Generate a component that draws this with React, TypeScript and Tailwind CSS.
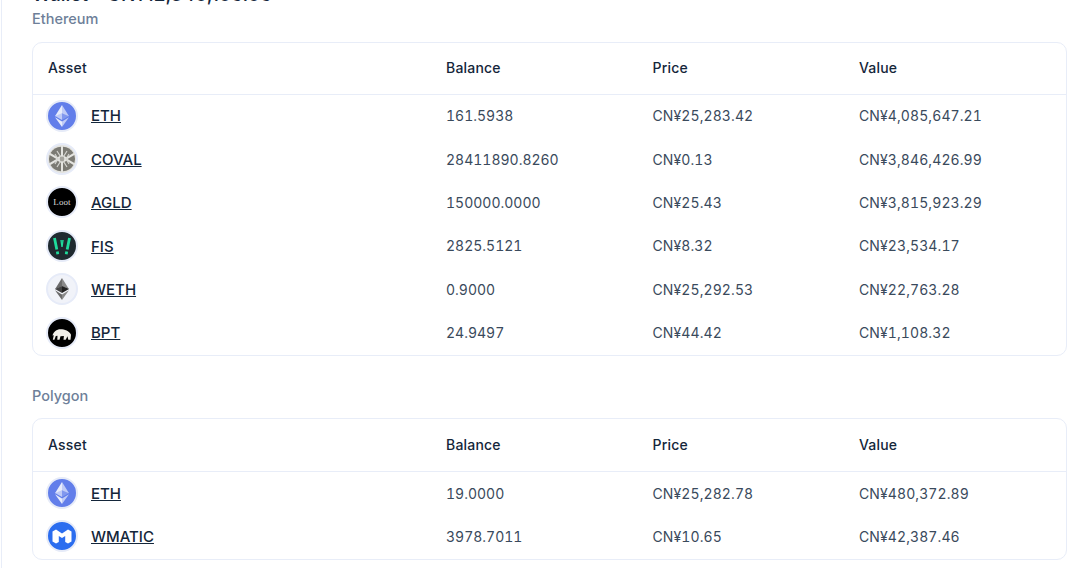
const font = { fontFamily: "Inter, sans-serif" };

type Row = { icon: string; name: string; balance: string; price: string; value: string };

const ethereum: Row[] = [
  { icon: "eth", name: "ETH", balance: "161.5938", price: "CN¥25,283.42", value: "CN¥4,085,647.21" },
  { icon: "coval", name: "COVAL", balance: "28411890.8260", price: "CN¥0.13", value: "CN¥3,846,426.99" },
  { icon: "agld", name: "AGLD", balance: "150000.0000", price: "CN¥25.43", value: "CN¥3,815,923.29" },
  { icon: "fis", name: "FIS", balance: "2825.5121", price: "CN¥8.32", value: "CN¥23,534.17" },
  { icon: "weth", name: "WETH", balance: "0.9000", price: "CN¥25,292.53", value: "CN¥22,763.28" },
  { icon: "bpt", name: "BPT", balance: "24.9497", price: "CN¥44.42", value: "CN¥1,108.32" },
];

const polygon: Row[] = [
  { icon: "eth", name: "ETH", balance: "19.0000", price: "CN¥25,282.78", value: "CN¥480,372.89" },
  { icon: "wmatic", name: "WMATIC", balance: "3978.7011", price: "CN¥10.65", value: "CN¥42,387.46" },
];

const TokenIcon = ({ icon }: { icon: string }) => {
  if (icon === "eth" || icon === "weth") {
    const dark = icon === "weth";
    return (
      <svg viewBox="0 0 32 32" className="w-[32px] h-[32px] shrink-0">
        <circle cx="16" cy="16" r="15" fill={dark ? "#f1f3f9" : "#627eea"} stroke="#e6ebf8" strokeWidth="2" />
        <path d="M16 5v8.2l7 3.1z" fill={dark ? "#8a8a8a" : "#fff"} fillOpacity={dark ? 1 : 0.6} />
        <path d="M16 5l-7 11.3 7-3.1z" fill={dark ? "#6b6b6b" : "#fff"} fillOpacity={dark ? 1 : 0.85} />
        <path d="M16 21.4v5.600l7-9.700z" fill={dark ? "#8a8a8a" : "#fff"} fillOpacity={dark ? 1 : 0.6} />
        <path d="M16 27v-5.600l-7-4.100z" fill={dark ? "#6b6b6b" : "#fff"} fillOpacity={dark ? 1 : 0.85} />
        <path d="M16 20.100l7-4.100-7-3.100z" fill={dark ? "#222" : "#fff"} fillOpacity={dark ? 1 : 0.2} />
        <path d="M9 16l7 4.100v-7.200z" fill={dark ? "#444" : "#fff"} fillOpacity={dark ? 1 : 0.6} />
      </svg>
    );
  }
  if (icon === "coval") {
    return (
      <svg viewBox="0 0 32 32" className="w-[32px] h-[32px] shrink-0">
        <circle cx="16" cy="16" r="15" fill="#e4e4e0" stroke="#e6ebf8" strokeWidth="2" />
        <g fill="#7b7a73">
          <path d="M15 3.800v8.400l-3.500 2-7-4.100A13 13 0 0 1 15 3.800z" />
          <path d="M17 3.800v8.400l3.500 2 7-4.100A13 13 0 0 0 17 3.800z" />
          <path d="M15 28.200v-8.400l-3.500-2-7 4.100A13 13 0 0 0 15 28.200z" />
          <path d="M17 28.200v-8.400l3.500-2 7 4.100A13 13 0 0 1 17 28.200z" />
          <path d="M3.600 12l6.900 4-6.900 4a13 13 0 0 1 0-8zM28.400 12l-6.900 4 6.900 4a13 13 0 0 0 0-8z" />
        </g>
        <path d="M11 8l5 8-5 8M21 8l-5 8 5 8M9 11l3 5-3 5M23 11l-3 5 3 5" stroke="#d4d4cf" strokeWidth="1.2" fill="none" />
        <circle cx="16" cy="16" r="2.400" fill="#a5a49e" />
      </svg>
    );
  }
  if (icon === "agld") {
    return (
      <svg viewBox="0 0 32 32" className="w-[32px] h-[32px] shrink-0">
        <circle cx="16" cy="16" r="15" fill="#000" stroke="#e6ebf8" strokeWidth="2" />
        <text x="16" y="19" textAnchor="middle" fontSize="9" fill="#d8d8d8" fontFamily="Liberation Serif, serif">Loot</text>
      </svg>
    );
  }
  if (icon === "fis") {
    return (
      <svg viewBox="0 0 32 32" className="w-[32px] h-[32px] shrink-0">
        <circle cx="16" cy="16" r="15" fill="#1f2a30" stroke="#e6ebf8" strokeWidth="2" />
        <g stroke="#1fdc9c" strokeWidth="2.800" fill="none">
          <path d="M8.500 8l2.300 11.500M23.500 8l-2.300 11.500" />
          <path d="M11.300 21.500l.5 2.800M20.700 21.500l-.5 2.800" />
        </g>
        <path d="M14.300 10h1.500l.2 3.500.2-3.500h1.500l-1 7h-1.400z" fill="#1fdc9c" />
      </svg>
    );
  }
  if (icon === "bpt") {
    return (
      <svg viewBox="0 0 32 32" className="w-[32px] h-[32px] shrink-0">
        <circle cx="16" cy="16" r="15" fill="#000" stroke="#e6ebf8" strokeWidth="2" />
        <path d="M6.500 18.500c1-3.600 4-6.200 8-6.200 4.200 0 8.600 1.500 10.500 5.500l-.5 5h-2.200l-.8-3.600-1.800 3.600h-2.200l.4-3.800-3.400.3-1 3.500h-2.200l.2-4-1.700.1-1.400 3.900H6.800l1-4.600z" fill="#f2f0ea" />
      </svg>
    );
  }
  return (
    <svg viewBox="0 0 32 32" className="w-[32px] h-[32px] shrink-0">
      <circle cx="16" cy="16" r="15" fill="#2b6def" stroke="#e6ebf8" strokeWidth="2" />
      <path d="M6.500 21.500v-10l3.500-2 6 4 6-4 3.500 2v10l-3.500 2-2.800-1.600v-6l-3.200 2.100-3.200-2.100v6L10 23.500z" fill="#fff" />
    </svg>
  );
};

const AssetTable = ({ rows, headerClass }: { rows: Row[]; headerClass: string }) => (
  <div className="border border-[#e8edf8] rounded-[10px] bg-white">
    <div className={`grid grid-cols-[398px_206.5px_206.5px_1fr] pb-[2px] items-center pl-[15px] border-b border-[#e8edf8] text-[14px] font-medium tracking-[0.2px] text-[#14263a] ${headerClass}`}>
      <div>Asset</div>
      <div>Balance</div>
      <div>Price</div>
      <div>Value</div>
    </div>
    <div>
      {rows.map((row) => (
        <div key={row.name} className="grid grid-cols-[398px_206.5px_206.5px_1fr] h-[43.4px] pb-[2px] items-center pl-[15px] text-[14px] tracking-[0.1px] tabular-nums text-[#3a4a5c]">
          <div className="flex items-center gap-[13px] -ml-[2px]">
            <TokenIcon icon={row.icon} />
            <a href="#" className="block mt-[2px] text-[15px] tracking-normal font-medium underline text-[#14263a]">{row.name}</a>
          </div>
          <div className="tracking-normal">{row.balance}</div>
          <div>{row.price}</div>
          <div>{row.value}</div>
        </div>
      ))}
    </div>
  </div>
);

export default function App() {
  return (
    <div style={font} className="w-[1080px] h-[568px] overflow-hidden bg-white">
      <div className="ml-[1px] h-[600px] -mt-[16px] border-l border-[#e8edf8] pl-[30px] pr-[13px]">
        <div className="text-[19px] leading-[22px] font-medium text-[#14263a] mb-[4px]">Wallet - CN¥12,340,106.06</div>
        <div className="text-[14.5px] leading-[18px] font-medium text-[#6e7f99] mb-[14px]">Ethereum</div>
        <AssetTable rows={ethereum} headerClass="h-[52px]" />
        <div className="text-[14.5px] leading-[18px] font-medium text-[#6e7f99] mt-[31px] mb-[13px]">Polygon</div>
        <AssetTable rows={polygon} headerClass="h-[53px]" />
      </div>
    </div>
  );
}
